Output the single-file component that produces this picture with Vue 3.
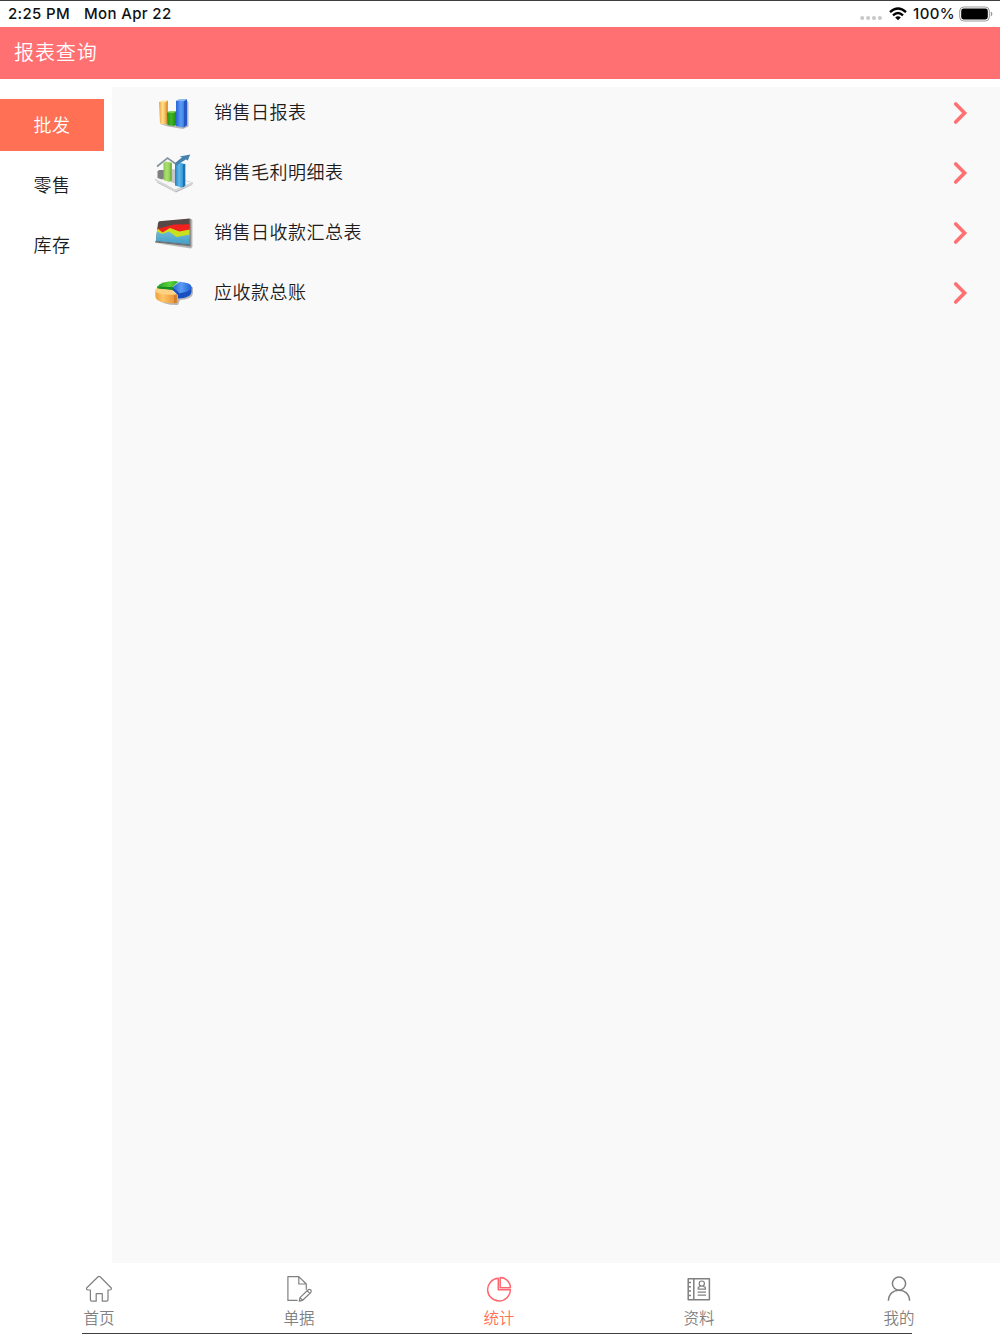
<script setup>
import { ref } from "vue";

const activeCategory = ref("批发");
const activeTab = ref("stats");

const categories = ["批发", "零售", "库存"];

const reports = [
  { icon: "bars", name: "销售日报表" },
  { icon: "trend", name: "销售毛利明细表" },
  { icon: "area", name: "销售日收款汇总表" },
  { icon: "pie", name: "应收款总账" },
];

const tabs = [
  { key: "home", label: "首页" },
  { key: "bill", label: "单据" },
  { key: "stats", label: "统计" },
  { key: "data", label: "资料" },
  { key: "mine", label: "我的" },
];
</script>

<template>
  <div class="page">
    <div class="status-bar">
      <span class="time">2:25 PM</span>
      <span class="date">Mon Apr 22</span>
      <svg class="signal" viewBox="0 0 22 6">
        <circle cx="2.2" cy="3" r="2" />
        <circle cx="8.1" cy="3" r="2" />
        <circle cx="14" cy="3" r="2" />
        <circle cx="19.9" cy="3" r="2" />
      </svg>
      <svg class="wifi" viewBox="0 0 18 14">
        <path d="M1 5.1 Q9 -2.3 17 5.1" />
        <path d="M4 8.3 Q9 3.8 14 8.3" />
        <path class="dot" d="M6.2 10.5 Q9 8.2 11.8 10.5 L9 13.3 Z" />
      </svg>
      <span class="percent">100%</span>
      <svg class="battery" viewBox="0 0 34 16">
        <rect x="0.7" y="1" width="29.6" height="14" rx="4" class="shell" />
        <rect x="2.2" y="2.6" width="26.6" height="10.8" rx="2.4" />
        <path d="M31.8 5.6 Q33.4 6.2 33.4 8 Q33.4 9.8 31.8 10.4 Z" class="cap" />
      </svg>
    </div>

    <header class="header">报表查询</header>

    <main class="main">
      <nav class="sidebar">
        <div
          v-for="item in categories"
          :key="item"
          class="category"
          :class="{ active: item === activeCategory }"
          @click="activeCategory = item"
        >
          {{ item }}
        </div>
      </nav>

      <section class="reports">
        <div v-for="item in reports" :key="item.name" class="report">
          <svg class="report-icon" viewBox="0 0 40 40">
            <!-- 柱状图 -->
            <g v-if="item.icon === 'bars'">
              <path d="M6 31 L14 33.5 L29 36 L34.5 33.5 V9 L32 7 V32 Z" class="shade" />
              <path d="M5 9 L8 7.8 H14 V30 L11.5 31.6 L6 30.4 Z" fill="url(#gold)" />
              <path d="M5 9 L8 7.8 H14 L11.5 9.2 Z" fill="#ffe5a0" />
              <path d="M11.8 9.2 L14 7.8 V30 L11.8 31.4 Z" fill="#e09a35" />
              <path d="M13 19.5 L15.5 18.2 H22.5 V31.5 L20 33 L13.4 32 Z" fill="url(#green)" />
              <path d="M13 19.5 L15.5 18.2 H22.5 L20 19.8 Z" fill="#8fd862" />
              <path d="M22 8 L25 6.6 H33 V32 L29.5 34.4 L22 33 Z" fill="url(#blue)" />
              <path d="M22 8 L25 6.6 H33 L30 8.2 Z" fill="#86b7f5" />
              <path d="M30 8.2 L33 6.6 V32 L30 34.2 Z" fill="#2459c4" />
            </g>
            <!-- 柱状图与趋势箭头 -->
            <g v-else-if="item.icon === 'trend'">
              <path d="M2 29 L22 39.5 L38 32 L39 29.5 L30 27 V33 Z" class="shade" />
              <path d="M1 25.5 L9 22 L38 29.5 L21 36.8 Z" fill="#f6f6f6" />
              <path d="M1 25.5 L21 36.8 L38 29.5 V31.6 L21 38.8 L1 27.5 Z" fill="#d6d8da" />
              <path d="M3.5 18 L5.5 17 H10 V25.5 L8 26.5 L3.5 25 Z" fill="#7d8081" />
              <path d="M16.8 17 L19 16 L22.5 17 V31 L16.8 29 Z" fill="#c3c7ca" />
              <path d="M9.5 10 L12 8.6 L17.8 9.8 V27.5 L15.2 29 L9.5 27 Z" fill="url(#lime)" />
              <path d="M16 10.8 L17.8 9.8 V27.5 L16 28.4 Z" fill="#74b843" />
              <path d="M21 11 L24 9.6 L31.2 11 V32.8 L28 34.8 L21 32.5 Z" fill="url(#cyan)" />
              <path d="M29 12 L31.2 11 V32.8 L29 34.2 Z" fill="#1b72b0" />
              <path d="M3 13.5 L13.5 5 L21.5 10.8 L29 5" class="arrow-line" />
              <path d="M20.5 10.6 L28 4.6 L25.8 3.6 L36.2 1.5 L33.8 7.6 L31.8 6.5 L22.5 12.6 Z" fill="#4582ad" />
            </g>
            <!-- 面积图 -->
            <g v-else-if="item.icon === 'area'">
              <path d="M1 30 L37 35.5 L38.4 34 V7 L37 5.8 V33 Z" class="shade" />
              <path d="M5 8.2 L35.8 5.4 V32.5 L1.8 28.8 L4 10 Z" fill="#554845" />
              <path d="M3.5 14.5 L5 15.6 L20 11.5 L35.8 11.2 V20 H3 Z" fill="#f1221d" />
              <path d="M3 17 L4 15.8 L8.5 19.4 L16 15 L25.5 18.5 L35.8 16.5 V24 H3 Z" fill="#c9e01e" />
              <path d="M2.8 18.2 L8 21 L15 18.4 L22.5 24 L35.8 21.5 V31.8 L1.8 28.2 Z" fill="url(#sky)" />
              <path d="M1.6 28 L35.8 31.6 V5.6 L36.8 6 V33.5 L1 29.6 Z" fill="#737473" />
            </g>
            <!-- 饼图 -->
            <g v-else>
              <path d="M3 26 Q10 32.5 24 32 L26 27 Q39 26 39 20 V14 L24 20 Z" class="shade" />
              <path d="M3.2 13.5 L18 11.5 L20 17.5 L3.2 15.8 Z" fill="#168c22" />
              <path d="M3.2 13.8 Q7 8.2 21 8 L24.5 8.7 L18.5 14 Z" fill="url(#leaf)" />
              <path d="M18.8 14 L24 18 L37.5 13.5 V19 Q37 24.8 24 25.6 V22 L18.8 17.2 Z" fill="#1a4fc0" />
              <path d="M25.5 8.8 Q37.5 9.6 37.5 14.2 Q37 18.6 25.5 20.2 L18.8 14 Z" fill="url(#blue)" />
              <path d="M1.4 16.8 L22.8 21.8 V30 Q3.5 31 1.4 24 Z" fill="url(#orange)" />
              <path d="M1.4 16.8 Q1.5 15.5 3 15.5 L18 17 L22.8 21.6 Q5 22.4 1.4 18.5 Z" fill="#ffd283" />
              <path d="M20 22 L22.8 21.6 V29.8 L20 30.2 Z" fill="#d07f2f" />
            </g>
          </svg>
          <span class="report-name">{{ item.name }}</span>
          <svg class="chevron" viewBox="0 0 16 24">
            <path d="M2.7 3 L11.6 12 L2.7 21" />
          </svg>
        </div>
      </section>
    </main>

    <footer class="tab-bar">
      <div
        v-for="tab in tabs"
        :key="tab.key"
        class="tab"
        :class="{ active: tab.key === activeTab }"
        @click="activeTab = tab.key"
      >
        <svg class="tab-icon" viewBox="0 0 28 28">
          <g v-if="tab.key === 'home'">
            <path d="M12.8 2 Q14 .9 15.4 2 L26.3 13 Q26.8 15 24.8 15 H23 V24.8 Q23 26.2 21.6 26.2 H17.3 V18.6 H11.2 V26.2 H6.8 Q5.4 26.2 5.4 24.8 V15 H3.2 Q1 14.8 1.6 13 Z" />
          </g>
          <g v-else-if="tab.key === 'bill'">
            <path d="M12.5 25.4 H2.9 V1.6 H13.8 L21.3 9 V14.8 M13.8 1.6 V9 H21.3" />
            <path d="M14.2 26.2 L15 22.6 L23.2 14.8 Q24.5 13.9 25.8 15 Q26.8 16.2 25.8 17.5 L17.6 25.3 Z M22.2 15.8 L24.8 18.4 M15 22.6 L17.6 25.3" />
          </g>
          <g v-else-if="tab.key === 'stats'" class="stats">
            <path d="M13.3 3.2 A11.4 11.4 0 1 0 25.4 14.8 H13.3 Z" />
            <path d="M15.2 2.4 A10.4 10.4 0 0 1 25.4 12.7 H15.2 Z" />
          </g>
          <g v-else-if="tab.key === 'data'">
            <path d="M3.2 3.7 H24.4 V24.8 H3.2 Z M8.8 3.7 V24.8" stroke-width="1.5" />
            <path d="M3 7.5 H6 M3 11.8 H6 M3 16.1 H6 M3 20.4 H6" stroke-width="1.5" />
            <circle cx="16.8" cy="8.6" r="2.6" />
            <path d="M15.6 10.9 L13.2 12.6 V14.2 H20.4 V12.6 L18 10.9 M12.6 17.2 H21 M12.6 20.2 H21" />
          </g>
          <g v-else class="person">
            <circle cx="14" cy="8.6" r="6.6" />
            <path d="M3.4 25.8 C3.6 18.8 8.4 15.2 14 15.2 S24.4 18.8 24.6 25.8" />
          </g>
        </svg>
        <span class="tab-label">{{ tab.label }}</span>
      </div>
    </footer>

    <svg class="defs" width="0" height="0">
      <defs>
        <linearGradient id="gold"><stop stop-color="#efa33a" /><stop offset=".4" stop-color="#ffdc8c" /><stop offset="1" stop-color="#e69b2b" /></linearGradient>
        <linearGradient id="green"><stop stop-color="#259316" /><stop offset=".45" stop-color="#3fb526" /><stop offset="1" stop-color="#1f860f" /></linearGradient>
        <linearGradient id="blue"><stop stop-color="#2964d7" /><stop offset=".45" stop-color="#5a9cf3" /><stop offset="1" stop-color="#1f5fd4" /></linearGradient>
        <linearGradient id="lime"><stop stop-color="#88c94c" /><stop offset=".4" stop-color="#b0df72" /><stop offset="1" stop-color="#7cc044" /></linearGradient>
        <linearGradient id="cyan"><stop stop-color="#1f80c0" /><stop offset=".4" stop-color="#62b7e9" /><stop offset="1" stop-color="#1a82c8" /></linearGradient>
        <linearGradient id="sky" x2="0" y2="1"><stop stop-color="#71bad8" /><stop offset="1" stop-color="#439dc5" /></linearGradient>
        <linearGradient id="leaf"><stop stop-color="#1fa02b" /><stop offset=".6" stop-color="#5fd03a" /><stop offset="1" stop-color="#27ad2c" /></linearGradient>
        <linearGradient id="orange"><stop stop-color="#eda03c" /><stop offset=".35" stop-color="#ffc566" /><stop offset="1" stop-color="#e78b2e" /></linearGradient>
      </defs>
    </svg>
  </div>
</template>

<style>
body {
  margin: 0;
}
</style>

<style scoped>
.page {
  position: relative;
  display: flex;
  flex-direction: column;
  box-sizing: border-box;
  height: 1334px;
  border-top: 1px solid #3e3d3f;
  background: #fff;
  color: #1c1c1c;
  font-family: "Noto Sans CJK SC", sans-serif;
  font-weight: 350;
}

.page::after {
  content: "";
  position: absolute;
  left: 82px;
  bottom: 0;
  width: 830px;
  height: 1px;
  background: #414042;
}

.status-bar {
  display: flex;
  align-items: center;
  flex: none;
  height: 26px;
  padding: 0 7px 0 8px;
  color: #111;
  font: 500 15px/26px Inter, sans-serif;
  letter-spacing: 0.35px;
}

.date {
  margin-left: 14px;
}

.signal {
  width: 22px;
  height: 6px;
  margin: 8px 7px 0 auto;
  fill: #c8c8c8;
}

.wifi {
  width: 18px;
  height: 14px;
  margin-right: 6px;
  fill: none;
  stroke: #000;
  stroke-width: 2.4;
}

.wifi .dot {
  fill: #000;
  stroke: none;
}

.battery {
  width: 34px;
  height: 16px;
  margin-left: 4px;
}

.battery .shell {
  fill: none;
  stroke: #999;
  stroke-width: 1;
}

.battery .cap {
  fill: #999;
}

.header {
  flex: none;
  box-sizing: border-box;
  height: 52px;
  padding-left: 14px;
  background: #ff7072;
  color: #fff;
  font-size: 20px;
  line-height: 50px;
  letter-spacing: 0.9px;
}

.main {
  display: flex;
  flex: 1;
  padding-top: 8px;
}

.sidebar {
  display: flex;
  flex-direction: column;
  gap: 8px;
  width: 104px;
  margin-right: 8px;
  padding-top: 12px;
}

.category {
  box-sizing: border-box;
  height: 52px;
  font-size: 18px;
  line-height: 51px;
  letter-spacing: 0.5px;
  text-align: center;
}

.category.active {
  background: #ff7055;
  color: #fff;
}

.reports {
  display: flex;
  flex: 1;
  flex-direction: column;
  gap: 8px;
  background: #f9f9f9;
}

.report {
  display: flex;
  align-items: center;
  height: 52px;
  padding: 0 31px 0 42px;
}

.report-icon {
  width: 40px;
  height: 40px;
}

.report-icon .shade {
  fill: #555;
  opacity: 0.4;
}

.report-icon .arrow-line {
  fill: none;
  stroke: #86969e;
  stroke-width: 1.7;
}

.report-name {
  margin-left: 20px;
  padding-bottom: 3px;
  font-size: 18px;
  line-height: 49px;
  letter-spacing: 0.5px;
}

.chevron {
  width: 16px;
  height: 24px;
  margin-left: auto;
  fill: none;
  stroke: #ff7072;
  stroke-width: 3.6;
  stroke-linecap: round;
}

.tab-bar {
  display: flex;
  flex: none;
  box-sizing: border-box;
  width: 1000px;
  height: 71px;
  padding-top: 12px;
}

.tab {
  display: flex;
  flex: 1;
  flex-direction: column;
  align-items: center;
  padding-right: 2px;
  color: #808080;
}

.tab.active {
  color: #ff7055;
}

.tab-icon {
  width: 28px;
  height: 28px;
  fill: none;
  stroke: currentColor;
  stroke-width: 1.2;
  stroke-linejoin: round;
}

.active .tab-icon {
  stroke: #ff6670;
}

.stats,
.person {
  stroke-width: 1.5;
}

.tab-label {
  font-size: 15.5px;
  line-height: 29px;
}

.defs {
  position: absolute;
}
</style>
